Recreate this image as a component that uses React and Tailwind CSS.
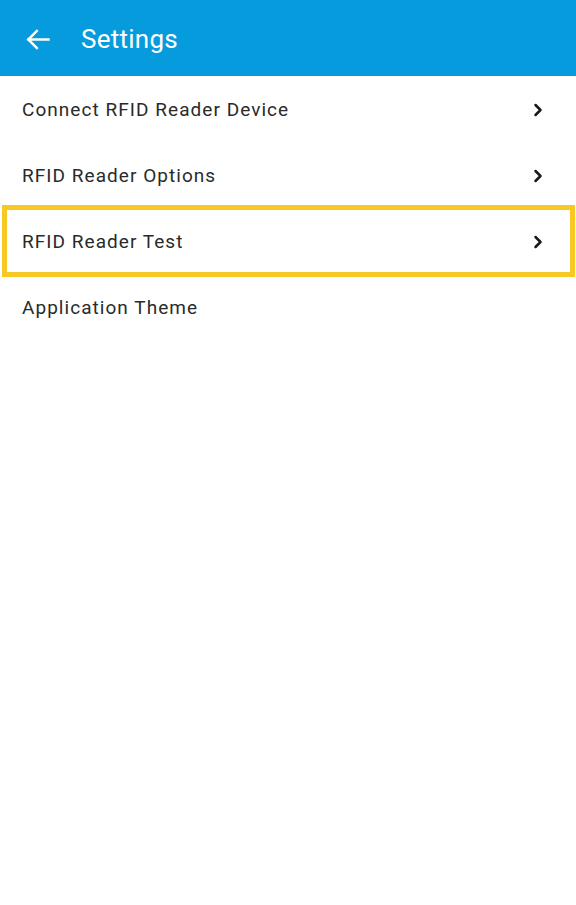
import { ChevronRight } from 'lucide-react';

const items = [
  { label: 'Connect RFID Reader Device', chevron: true },
  { label: 'RFID Reader Options', chevron: true },
  { label: 'RFID Reader Test', chevron: true, highlight: true },
  { label: 'Application Theme', chevron: false },
];

function BackArrow() {
  return (
    <svg width="33" height="33" viewBox="0 0 24 24" fill="none" stroke="white" strokeWidth="1.8" strokeLinecap="square">
      <path d="M20 12H5.5" />
      <path d="M11.5 5.8L5.3 12l6.2 6.2" />
    </svg>
  );
}

export default function App() {
  return (
    <div className="w-[576px] h-[905px] bg-white font-['Roboto',sans-serif]">
      {/* App bar */}
      <header className="h-[76px] bg-[#069bdd] flex items-center pl-[21px] pt-[3px]">
        <BackArrow />
        <h1 className="ml-[27px] text-[26px] text-white tracking-[0.01em]">Settings</h1>
      </header>

      <ul>
        {items.map((item) => (
          <li
            key={item.label}
            className="relative h-[66px] flex items-center justify-between pl-[22px] pr-[28px] pt-[2px]"
          >
            {/* highlight frame */}
            {item.highlight && (
              <div className="absolute left-[2px] right-[1px] -top-[3px] -bottom-[3px] border-[5px] border-[#f6c927]" />
            )}
            <span className="text-[19px] text-[#2a2a2a] tracking-[0.055em]">{item.label}</span>
            {item.chevron && <ChevronRight size={20} strokeWidth={3} className="text-[#1a1a1a]" />}
          </li>
        ))}
      </ul>
    </div>
  );
}
